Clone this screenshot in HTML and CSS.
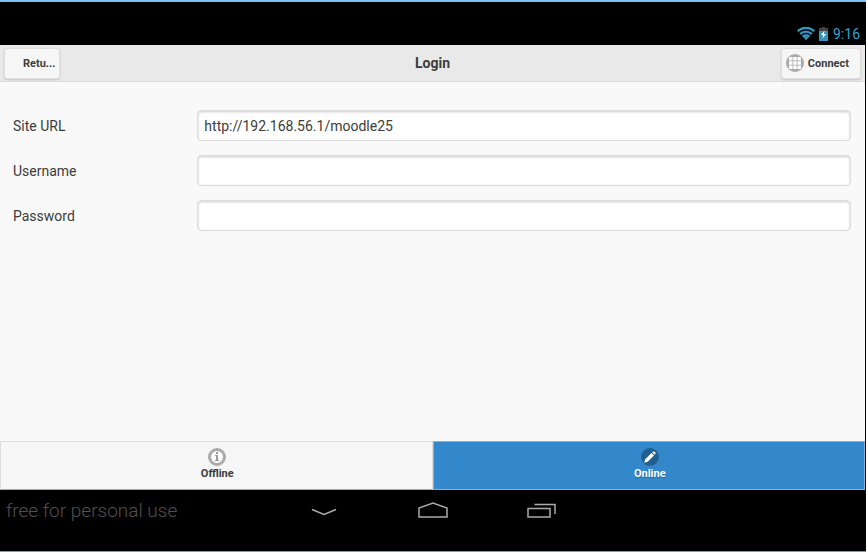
FILE: index.html
```
<!DOCTYPE html>
<html lang="en">
<head>
<meta charset="utf-8">
<title>Login</title>
<link rel="stylesheet" href="styles.css">
</head>
<body>
<div class="device">
  <div class="status">
    <svg class="wifi" viewBox="0 0 18 14" aria-hidden="true">
      <path class="signal" d="M0.7 4.2Q9-2.6 17.3 4.2M3.2 7Q9 2.2 14.8 7M5.6 9.6Q9 6.8 12.4 9.6"/>
      <path d="M6.4 10.2Q9 8.4 11.6 10.2L9 13.2Z"/>
    </svg>
    <svg class="battery" viewBox="0 0 9 14" aria-hidden="true">
      <path class="cap" d="M3 0h3v1h3v4H0V1h3z"/>
      <path d="M0 4h9v10H0z"/>
      <path class="bolt" d="M5.5 3.5L2 8h2.200L3.500 11.500L7 7H4.800z"/>
    </svg>
    <span class="clock">9:16</span>
  </div>
  <div class="app">
    <header class="header">
      <button class="btn btn-back" type="button">Retu...</button>
      <h1>Login</h1>
      <button class="btn btn-connect" type="submit" form="login">
        <svg class="disc" viewBox="0 0 18 18" aria-hidden="true">
          <circle class="disc-bg" cx="9" cy="9" r="9"/>
          <path class="cells" d="M3 3h3.500v3.500H3zM7.300 3h3.400v3.500H7.300zM11.500 3H15v3.500h-3.500zM3 7.300h3.500v3.400H3zM7.300 7.300h3.400v3.400H7.300zM11.500 7.300H15v3.400h-3.500zM3 11.500h3.500V15H3zM7.300 11.500h3.400V15H7.300zM11.500 11.500H15V15h-3.500z"/>
        </svg>
        <span>Connect</span>
      </button>
    </header>
    <form class="form" id="login">
      <div class="field"><label for="url">Site URL</label><input id="url" type="text" value="http://192.168.56.1/moodle25"></div>
      <div class="field"><label for="user">Username</label><input id="user" type="text"></div>
      <div class="field"><label for="pass">Password</label><input id="pass" type="password"></div>
    </form>
    <nav class="tabs">
      <button class="tab" type="button">
        <svg class="disc" viewBox="0 0 18 18" aria-hidden="true">
          <circle class="ring" cx="9" cy="9" r="7.500"/>
          <path class="info" d="M8 4h2v2H8zM7 7h3v5h1v1H7v-1h1V8H7z"/>
        </svg>
        <span>Offline</span>
      </button>
      <button class="tab tab-active" type="button">
        <svg class="disc" viewBox="0 0 18 18" aria-hidden="true">
          <circle class="disc-dark" cx="9" cy="9" r="9"/>
          <path class="pencil" d="M3.200 14.800L4.200 11.300L10.500 5L13 7.500L6.700 13.800ZM11.200 4.300L12.300 3.500Q13 3.200 13.600 3.800L14.300 4.500Q14.900 5.200 14.500 5.800L13.700 6.800Z"/>
        </svg>
        <span>Online</span>
      </button>
    </nav>
  </div>
  <footer class="system">
    <span class="watermark">free for personal use</span>
    <div class="keys">
      <button type="button" aria-label="Back"><svg viewBox="0 0 30 18"><path d="M3 8.500L15 13.500L27 8.500"/></svg></button>
      <button type="button" aria-label="Home"><svg viewBox="0 0 30 18"><path d="M1 16V7L15 2L29 7V16Z"/></svg></button>
      <button type="button" aria-label="Recent apps"><svg viewBox="0 0 30 18"><path d="M1 7.500H23V16H1ZM7.500 3.500H28V13"/></svg></button>
    </div>
  </footer>
</div>
</body>
</html>
```
FILE: styles.css
```
* {
  box-sizing: border-box;
}

body {
  margin: 0;
  background: #000;
  color: #3c3c3c;
  font-family: Roboto, sans-serif;
}

button,
input {
  margin: 0;
  font-family: inherit;
  color: inherit;
}

.device {
  display: flex;
  flex-direction: column;
  min-height: 100vh;
  border-top: 2px solid #7fc1f2;
  border-bottom: 1px solid #6f9cc4;
}

.status {
  display: flex;
  align-items: flex-end;
  justify-content: flex-end;
  height: 43px;
  padding: 0 6px 3px 0;
  color: #33a1cc;
  fill: #3396bd;
}

.wifi {
  width: 18px;
  height: 14px;
  margin: 0 4px 1px 0;
}

.signal {
  fill: none;
  stroke: #3396bd;
  stroke-width: 2.3;
}

.battery {
  width: 9px;
  height: 14px;
  margin: 0 5px 1px 0;
}

.cap {
  fill: #444;
}

.bolt {
  fill: #fff;
}

.clock {
  font-size: 14px;
  line-height: 16px;
}

.app {
  display: flex;
  flex: 1;
  flex-direction: column;
  margin-right: 1px;
  background: #f9f9f9;
}

.header {
  display: grid;
  grid-template-columns: 1fr auto 1fr;
  align-items: center;
  height: 37px;
  padding: 0 4px;
  border-bottom: 1px solid #ddd;
  background: #e9e9e9;
}

.header h1 {
  margin: 0;
  font-size: 14px;
  line-height: 18px;
}

.btn {
  display: flex;
  align-items: center;
  height: 31px;
  padding: 0 11px 0 4px;
  border: 1px solid #ddd;
  border-radius: 3px;
  background: #f6f6f6;
  box-shadow: 0 1px 2px rgba(0, 0, 0, 0.15);
  font-size: 11px;
  font-weight: 700;
}

.btn-back {
  justify-self: start;
  padding: 0 4px 0 18px;
}

.btn-connect {
  gap: 4px;
  justify-self: end;
}

.disc {
  flex: none;
  width: 18px;
  height: 18px;
}

.disc-bg {
  fill: #aaa;
}

.cells {
  fill: #fff;
}

.form {
  display: flex;
  flex: 1;
  flex-direction: column;
  gap: 14px;
  padding: 28px 14px 20px 13px;
}

.field {
  display: grid;
  grid-template-columns: 22fr 78fr;
  align-items: center;
  font-size: 14px;
}

.field input {
  width: 100%;
  height: 31px;
  padding: 0 6px;
  border: 1px solid #ddd;
  border-radius: 4px;
  background: #fff;
  box-shadow: inset 0 1px 3px rgba(0, 0, 0, 0.2);
  font-size: 14px;
}

.tabs {
  display: grid;
  grid-template-columns: 1fr 1fr;
  height: 49px;
}

.tab {
  display: flex;
  flex-direction: column;
  align-items: center;
  padding: 6px 0 0 2px;
  border: 1px solid #ddd;
  border-bottom-color: #aaa;
  background: #f6f6f6;
  font-size: 11px;
  font-weight: 700;
  line-height: 16px;
}

.tab-active {
  border-color: #82b2d8;
  background: #3388cc;
  color: #fff;
  text-shadow: 0 1px 1px #225f91;
}

.ring {
  fill: #fff;
  stroke: #aaa;
  stroke-width: 3;
}

.info {
  fill: #999;
}

.disc-dark {
  fill: #225f91;
}

.pencil {
  fill: #fff;
}

.system {
  display: grid;
  grid-template-columns: 1fr auto 1fr;
  align-items: start;
  height: 61px;
  padding: 8px 0 0 6px;
}

.watermark {
  color: #505050;
  font-size: 19px;
  font-weight: 300;
  line-height: 26px;
}

.keys {
  display: flex;
  gap: 79px;
  padding: 3px 6px 0 0;
}

.keys button {
  padding: 0;
  border: 0;
  background: none;
}

.keys svg {
  display: block;
  width: 30px;
  height: 18px;
  fill: none;
  stroke: #aaa;
  stroke-width: 1.5;
}
```
